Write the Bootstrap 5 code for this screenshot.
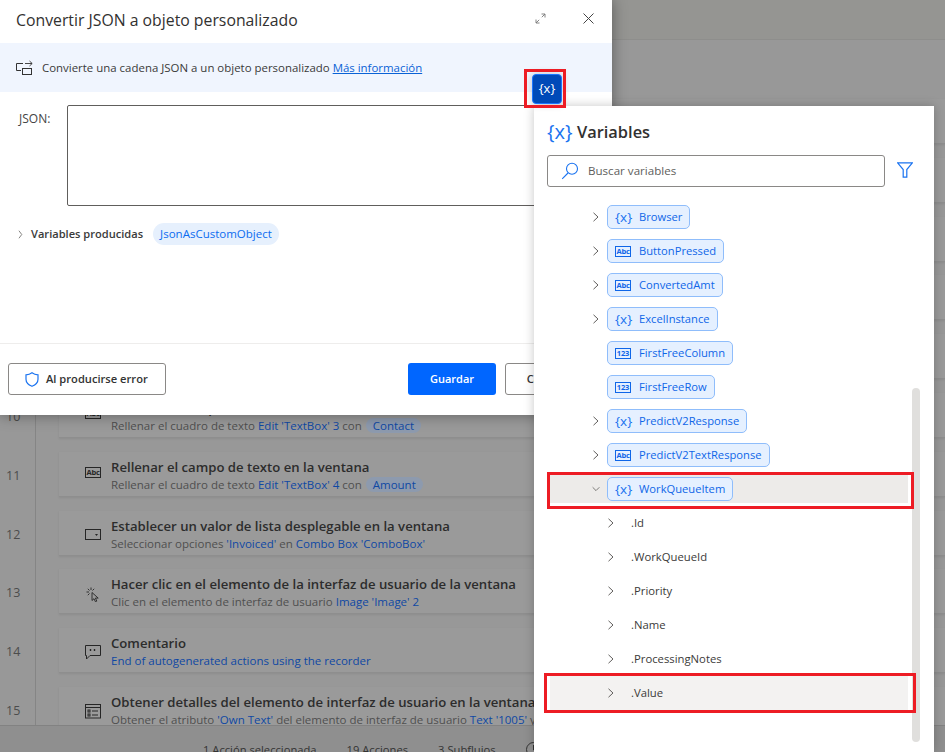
<!doctype html>
<html lang="es">
<head>
<meta charset="utf-8">
<title>Convertir JSON a objeto personalizado</title>
<link href="https://cdn.jsdelivr.net/npm/bootstrap@5.3.0/dist/css/bootstrap.min.css" rel="stylesheet">
<style>
html,body{margin:0;height:100%;background:#989898}
body{font-family:"Open Sans","Noto Sans",sans-serif;font-size:12px;color:#333;overflow:hidden}
.stage{width:945px;height:752px;overflow:hidden;background:#989898}
.topstrip{height:40px;background:#959592;border-bottom:1px solid #8e8e8c;flex:none}
.flowlist{flex:1 1 auto;min-height:0;overflow:hidden;padding-top:59px}
.flowrow{height:58.8px;display:flex;position:relative}
.rownum{width:36px;flex:none;border-right:1px solid #858585;color:#4c4c4c;font-size:12.5px;padding-left:6px;padding-top:15px;height:59px}
.stepcard{margin-left:23px;flex:1;height:45px;background:#9a9a9a;border-bottom:1px solid #8e8e8e;box-shadow:0 1px 2px rgba(0,0,0,.08);display:flex;padding-left:26px}
.stepicon{width:16px;margin-top:15px;flex:none;color:#262626}
.steptext{padding-left:10px;padding-top:6px;white-space:nowrap}
.steptitle{font-weight:600;font-size:13.15px;line-height:19px;color:#2c2c2c}
.stepsub{font-size:11.5px;line-height:16px;color:#4f4f4f}
.stepsub b{font-weight:400;color:#0f48a4}
.stepchip{background:#8d9aae;color:#0f48a4;border-radius:8px;padding:0 7px;margin-left:1px}
.statusbar{height:27px;flex:none;background:#8f8f8f;border-top:1px solid #828282;padding:16px 0 0 203px;color:#333;font-size:11.2px;line-height:16px;white-space:nowrap}
.statusbar span{margin-right:30px}
.boxglyph{display:block;width:16px;height:11px;border:1px solid currentColor;font-size:7.5px;line-height:9px;font-weight:700;text-align:center;letter-spacing:-.2px;overflow:hidden}
.dialogpane{left:0;top:0;width:612px;height:415px;background:#fff;box-shadow:0 0 14px rgba(0,0,0,.4);z-index:2}
.dlghead{height:43px;padding-left:16px;padding-bottom:2px;flex:none}
.dlgtitle{font-size:15.8px;font-weight:500;color:#323130}
.dlgtools{position:absolute;left:535px;top:13px;display:flex;gap:37px;color:#555}
.infoband{height:49px;background:#f0f5fe;padding-left:16px;font-size:11.45px;color:#3a3a3a;flex:none}
.infoband a{color:#0a62d6}
.jsonlabel{width:51px;padding-left:19px;padding-top:5px;box-sizing:content-box;font-size:12px;color:#444;flex:none}
.formzone{padding-top:13px;height:114px;flex:none}
textarea.jsonbox{width:488px;height:101px;border:1px solid #605e5c;border-radius:2px;flex:none;resize:none;box-shadow:none;margin-left:-3px}
.prodrow{padding-left:18px;height:56px;flex:none}
.prodlabel{font-weight:600;font-size:11.1px;margin-left:8px;color:#3a3a3a}
.prodchip{margin-left:10px;background:#e6f0fd;color:#0b6cf0;border-radius:11px;height:22px;line-height:22px;padding:0 7px;font-size:11.5px}
.dlgfoot{position:absolute;left:0;right:0;top:343px;height:72px;border-top:1px solid #eeedec;padding:19px 17px 0 8px}
.btn.errbtn{width:158px;height:32px;border:1px solid #8a8886;border-radius:3px;background:#fff;color:#333;font-weight:600;font-size:11.15px;padding:0 0 0 16px;display:flex;align-items:center;gap:7px}
.btn.savebtn{width:88px;height:32px;margin-left:242px;background:#0066ff;border:0;border-radius:3px;font-size:11px;font-weight:600;padding:0}
.btn.cancelbtn{width:90px;height:32px;margin-left:9px;background:#fff;border:1px solid #8a8886;border-radius:3px;font-size:11px;font-weight:600;color:#333;padding:0}
.varbtn{left:532px;top:74px;width:30px;height:30px;background:#004ab8;border:1px solid #1a75ff;border-radius:4px;color:#fff;font-size:13px;z-index:5;box-shadow:0 0 8px rgba(0,0,0,.2)}
.annotbox{border:3px solid #ed1c24;pointer-events:none}
.topannot{left:524px;top:69px;width:42px;height:39px;z-index:6}
.varpane{left:534px;top:106px;width:400px;height:646px;background:#fff;box-shadow:0 0 10px rgba(0,0,0,.22);z-index:3}
.panehead{padding:3px 0 0 13px;height:49px;flex:none}
.curly{font-family:"Open Sans",sans-serif;color:#1a73f0;font-weight:400;white-space:nowrap}
.panehead .curly{font-size:20px;line-height:22px;width:30px}
.panetitle{font-size:16.4px;font-weight:600;color:#323130;line-height:22px}
.searchzone{padding-left:13px;height:45px;flex:none}
.searchbox{width:338px;height:32px;border:1px solid #8a8886;border-radius:3px;padding-left:13px;gap:9px;color:#605e5c}
.searchbox input{border:0;outline:0;padding:0;font-size:11.6px;color:#605e5c;flex:1;min-width:0;background:transparent}
.searchbox input::placeholder{color:#605e5c;opacity:1}
.filterglyph{margin-left:12px;margin-top:7px;display:block}
.treearea{flex:1 1 auto;min-height:0}
.treerow{height:34px;position:relative;display:flex;align-items:center;color:#333}
.rowtop{padding-left:58px}
.rowkid{padding-left:73px;font-size:11.3px}
.rowkid .chev{margin-right:16px}
.chev{width:8px;flex:none;display:block;position:relative;z-index:1}
.gapchev{width:8px;flex:none}
.varchip{margin-left:7px;height:24px;background:#e5f0ff;border:1px solid #8fbdfb;border-radius:5px;display:flex;align-items:center;padding:0 7px;color:#0f66e8;font-size:11.2px;position:relative;z-index:1;white-space:nowrap}
.varchip .curly{font-size:13.5px;width:24px;line-height:18px}
.varchip .glyphslot{width:24px;flex:none}
.kidname{position:relative;z-index:1;color:#3b3a39}
.hlfirst{left:13px;top:0;width:367px;height:37px;padding:0 3px 3px 0}
.hlfill{display:block;height:100%;background:#edebe9}
.hlsecond{left:10px;top:-3px;width:372px;height:40px;padding:0 5px 0 3px}
.hlsecond .hlfill{background:#f3f2f1}
.scrolltrack{left:378px;top:282px;width:8px;height:354px;background:#e0dfdd;border-radius:4px}
</style>
</head>
<body>
<svg width="0" height="0" class="position-absolute">
<symbol id="ch-r" viewBox="0 0 8 10"><path d="M1.5 .8 6 5 1.5 9.2" fill="none" stroke="#605e5c" stroke-width="1"/></symbol>
<symbol id="ch-d" viewBox="0 0 10 8"><path d="M.8 1.8 5 6 9.2 1.8" fill="none" stroke="#605e5c" stroke-width="1"/></symbol>
</svg>

<div class="stage position-relative d-flex flex-column">
  <div class="topstrip"></div>
  <div class="flowlist">
    <div class="flowrow"><div class="rownum"></div><div class="stepcard"></div></div>
    <div class="flowrow"><div class="rownum"></div><div class="stepcard"></div></div>
    <div class="flowrow"><div class="rownum"></div><div class="stepcard"></div></div>
    <div class="flowrow"><div class="rownum"></div><div class="stepcard"></div></div>
    <div class="flowrow"><div class="rownum"></div><div class="stepcard"></div></div>
    <div class="flowrow"><div class="rownum">10</div><div class="stepcard"><div class="stepicon"><span class="boxglyph">Abc</span></div><div class="steptext"><div class="steptitle">Rellenar el campo de texto en la ventana</div><div class="stepsub">Rellenar el cuadro de texto <b>Edit 'TextBox' 3</b> con <span class="stepchip">Contact</span></div></div></div></div>
    <div class="flowrow"><div class="rownum">11</div><div class="stepcard"><div class="stepicon"><span class="boxglyph">Abc</span></div><div class="steptext"><div class="steptitle">Rellenar el campo de texto en la ventana</div><div class="stepsub">Rellenar el cuadro de texto <b>Edit 'TextBox' 4</b> con <span class="stepchip">Amount</span></div></div></div></div>
    <div class="flowrow"><div class="rownum">12</div><div class="stepcard"><div class="stepicon"><svg width="16" height="12" viewBox="0 0 16 12"><rect x=".5" y=".5" width="15" height="10" fill="none" stroke="currentColor"/><path d="M10 5h3l-1.5 2z" fill="currentColor"/></svg></div><div class="steptext"><div class="steptitle">Establecer un valor de lista desplegable en la ventana</div><div class="stepsub">Seleccionar opciones <b>'Invoiced'</b> en <b>Combo Box 'ComboBox'</b></div></div></div></div>
    <div class="flowrow"><div class="rownum">13</div><div class="stepcard"><div class="stepicon"><svg width="16" height="16" viewBox="0 0 16 16" fill="none" stroke="currentColor"><path d="M7 6.500v8l2-1.800 1.400 3 1.400-.6-1.400-3h2.800z" stroke-width=".9"/><path d="M6 1.500V4M1.500 6H4M2.800 2.800l1.700 1.700M9.200 2.800 7.500 4.500M2.800 9.200l1.700-1.700" stroke-width=".9"/></svg></div><div class="steptext"><div class="steptitle">Hacer clic en el elemento de la interfaz de usuario de la ventana</div><div class="stepsub">Clic en el elemento de interfaz de usuario <b>Image 'Image' 2</b></div></div></div></div>
    <div class="flowrow"><div class="rownum">14</div><div class="stepcard"><div class="stepicon"><svg width="16" height="15" viewBox="0 0 16 15" fill="none" stroke="currentColor"><path d="M.5.5h15v10H5l-3.500 3.500v-3.500h-1z"/><path d="M5.500 4v2M9.500 4v2" stroke-width="1.400"/></svg></div><div class="steptext"><div class="steptitle">Comentario</div><div class="stepsub"><b>End of autogenerated actions using the recorder</b></div></div></div></div>
    <div class="flowrow"><div class="rownum">15</div><div class="stepcard"><div class="stepicon"><svg width="16" height="15" viewBox="0 0 16 15" fill="none" stroke="currentColor"><rect x=".5" y=".5" width="15" height="13.500"/><path d="M.5 3.500h15M7 7h6M7 11h6"/><rect x="3" y="6" width="2" height="2"/><rect x="3" y="10" width="2" height="2"/></svg></div><div class="steptext"><div class="steptitle">Obtener detalles del elemento de interfaz de usuario en la ventana</div><div class="stepsub">Obtener el atributo <b>'Own Text'</b> del elemento de interfaz de usuario <b>Text '1005'</b> y almacenarlo en</div></div></div></div>
  </div>
  <div class="statusbar d-flex"><span>1 Acción seleccionada</span><span>19 Acciones</span><span>3 Subflujos</span><svg width="15" height="15" viewBox="0 0 15 15" fill="none" stroke="#333"><circle cx="7.500" cy="7.500" r="7"/><path d="M7.500 3v5h3"/></svg></div>

  <div class="dialogpane position-absolute d-flex flex-column">
    <div class="dlghead d-flex align-items-center"><div class="dlgtitle">Convertir JSON a objeto personalizado</div></div>
    <div class="dlgtools">
      <svg width="11" height="11" viewBox="0 0 11 11" fill="none" stroke="#777" stroke-width=".9"><path d="M6.500 1h3.500v3.500M10 1 6.800 4.200M4.500 10H1V6.500M1 10l3.200-3.200"/></svg>
      <svg width="11" height="11" viewBox="0 0 11 11" fill="none" stroke="#444" stroke-width="1"><path d="M.5.5l10 10M10.500.5l-10 10"/></svg>
    </div>
    <div class="infoband d-flex align-items-center">
      <svg width="18" height="16" viewBox="0 0 18 16" fill="none" stroke="#333" class="me-2 flex-none"><path d="M7 3.500H.5v7H5"/><rect x="6.500" y="8.500" width="9" height="6"/><path d="M9 3.500h7M13.500 1l2.700 2.500-2.700 2.500" stroke-width=".9"/></svg>
      <span>Convierte una cadena JSON a un objeto personalizado <a href="#">Más información</a></span>
    </div>
    <div class="formzone d-flex">
      <label class="jsonlabel">JSON:</label>
      <textarea class="form-control jsonbox" aria-label="JSON"></textarea>
    </div>
    <div class="prodrow d-flex align-items-center">
      <svg width="5" height="9" viewBox="0 0 8 10" preserveAspectRatio="none"><use href="#ch-r"/></svg>
      <span class="prodlabel">Variables producidas</span>
      <span class="prodchip">JsonAsCustomObject</span>
    </div>
    <div class="dlgfoot d-flex">
      <button class="btn errbtn" type="button"><svg width="14" height="15" viewBox="0 0 14 15" fill="none" stroke="#1a73f0" stroke-width="1.200"><path d="M7 .8c1.800 1.400 3.800 2 6 2v4.500c0 3.400-2.400 5.600-6 7-3.600-1.400-6-3.600-6-7V2.800c2.200 0 4.200-.6 6-2z"/></svg>Al producirse error</button>
      <button class="btn btn-primary savebtn" type="button">Guardar</button>
      <button class="btn cancelbtn" type="button">Cancelar</button>
    </div>
  </div>

  <div class="varbtn position-absolute d-flex align-items-center justify-content-center">{x}</div>
  <div class="annotbox topannot position-absolute"></div>

  <div class="varpane position-absolute d-flex flex-column">
    <div class="scrolltrack position-absolute"></div>
    <div class="panehead d-flex align-items-center"><span class="curly">{x}</span><span class="panetitle">Variables</span></div>
    <div class="searchzone d-flex align-items-start">
      <div class="searchbox d-flex align-items-center">
        <svg width="18" height="18" viewBox="0 0 18 18" fill="none" stroke="#1a73f0" stroke-width="1.100"><circle cx="11" cy="6.800" r="5.500"/><path d="M7 11 1.200 16.800"/></svg>
        <input type="text" placeholder="Buscar variables" aria-label="Buscar variables">
      </div>
      <svg class="filterglyph" width="16" height="16" viewBox="0 0 16 16" fill="none" stroke="#1a73f0" stroke-width="1.200"><path d="M.6.8h14.800L9.800 7.500v7.700H6.200V7.500z"/></svg>
    </div>
    <div class="treearea">
      <div class="treerow rowtop"><svg class="chev" width="8" height="10"><use href="#ch-r"/></svg><span class="varchip"><span class="curly">{x}</span>Browser</span></div>
      <div class="treerow rowtop"><svg class="chev" width="8" height="10"><use href="#ch-r"/></svg><span class="varchip"><span class="glyphslot"><span class="boxglyph">Abc</span></span>ButtonPressed</span></div>
      <div class="treerow rowtop"><svg class="chev" width="8" height="10"><use href="#ch-r"/></svg><span class="varchip"><span class="glyphslot"><span class="boxglyph">Abc</span></span>ConvertedAmt</span></div>
      <div class="treerow rowtop"><svg class="chev" width="8" height="10"><use href="#ch-r"/></svg><span class="varchip"><span class="curly">{x}</span>ExcelInstance</span></div>
      <div class="treerow rowtop"><span class="gapchev"></span><span class="varchip"><span class="glyphslot"><span class="boxglyph">123</span></span>FirstFreeColumn</span></div>
      <div class="treerow rowtop"><span class="gapchev"></span><span class="varchip"><span class="glyphslot"><span class="boxglyph">123</span></span>FirstFreeRow</span></div>
      <div class="treerow rowtop"><svg class="chev" width="8" height="10"><use href="#ch-r"/></svg><span class="varchip"><span class="curly">{x}</span>PredictV2Response</span></div>
      <div class="treerow rowtop"><svg class="chev" width="8" height="10"><use href="#ch-r"/></svg><span class="varchip"><span class="glyphslot"><span class="boxglyph">Abc</span></span>PredictV2TextResponse</span></div>
      <div class="treerow rowtop"><span class="annotbox hlfirst position-absolute"><span class="hlfill"></span></span><svg class="chev" width="10" height="8"><use href="#ch-d"/></svg><span class="varchip"><span class="curly">{x}</span>WorkQueueItem</span></div>
      <div class="treerow rowkid"><svg class="chev" width="8" height="10"><use href="#ch-r"/></svg><span class="kidname">.Id</span></div>
      <div class="treerow rowkid"><svg class="chev" width="8" height="10"><use href="#ch-r"/></svg><span class="kidname">.WorkQueueId</span></div>
      <div class="treerow rowkid"><svg class="chev" width="8" height="10"><use href="#ch-r"/></svg><span class="kidname">.Priority</span></div>
      <div class="treerow rowkid"><svg class="chev" width="8" height="10"><use href="#ch-r"/></svg><span class="kidname">.Name</span></div>
      <div class="treerow rowkid"><svg class="chev" width="8" height="10"><use href="#ch-r"/></svg><span class="kidname">.ProcessingNotes</span></div>
      <div class="treerow rowkid"><span class="annotbox hlsecond position-absolute"><span class="hlfill"></span></span><svg class="chev" width="8" height="10"><use href="#ch-r"/></svg><span class="kidname">.Value</span></div>
    </div>
  </div>
</div>
<script src="https://cdn.jsdelivr.net/npm/bootstrap@5.3.0/dist/js/bootstrap.bundle.min.js"></script>
</body>
</html>
